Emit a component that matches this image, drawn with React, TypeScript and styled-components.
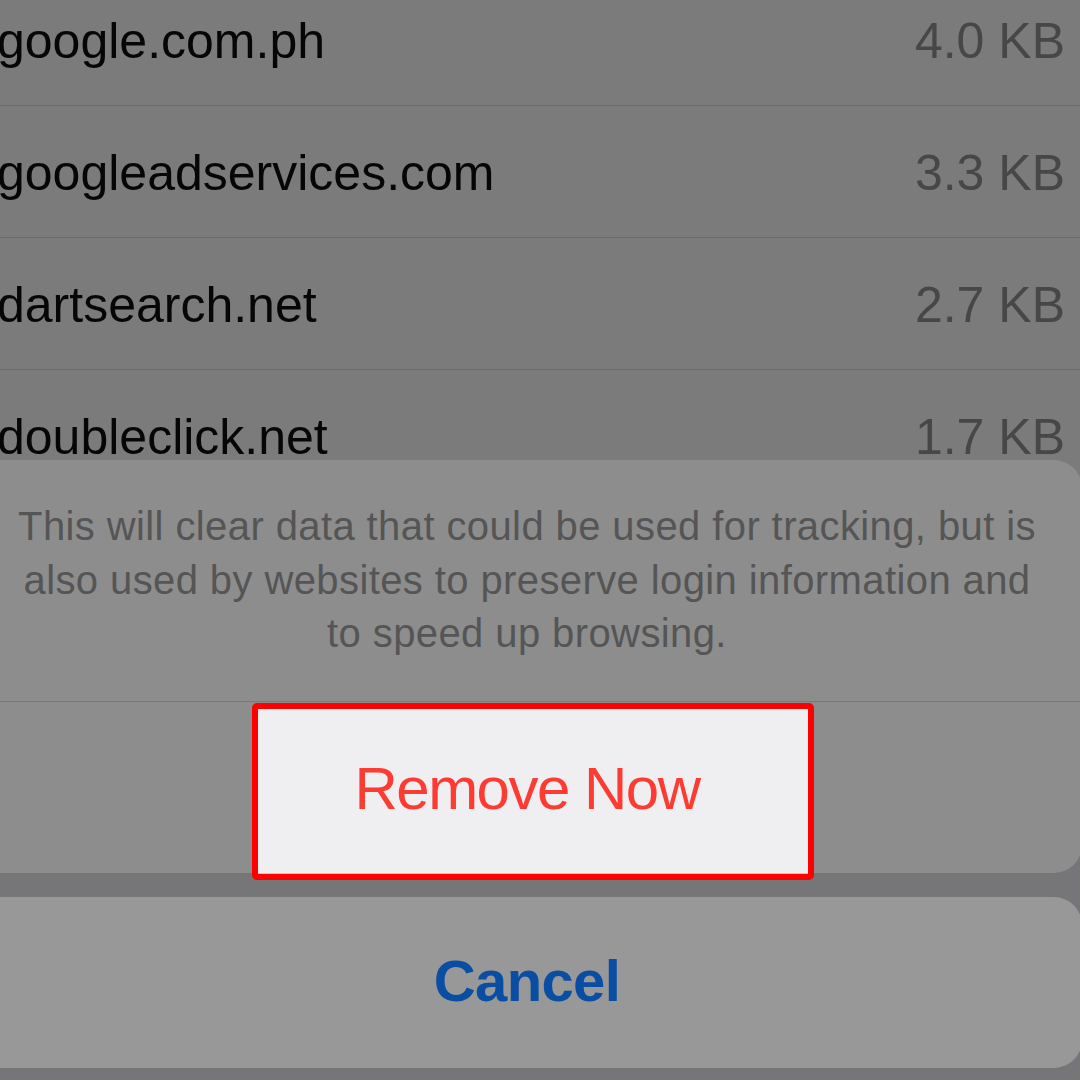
import React from "react";
import styled, { createGlobalStyle } from "styled-components";

const Global = createGlobalStyle`
  html, body {
    margin: 0;
    padding: 0;
    background: #767678;
    overflow: hidden;
  }
  body {
    font-family: "Liberation Sans", Arial, sans-serif;
  }
`;

const Screen = styled.div`
  position: relative;
  width: 1080px;
  height: 1080px;
  overflow: hidden;
  background: #767678;
`;

const List = styled.ul`
  list-style: none;
  margin: -26px 0 0 0;
  padding: 0;
`;

const Row = styled.li`
  height: 132px;
  box-sizing: border-box;
  display: flex;
  align-items: center;
  justify-content: space-between;
  padding: 3px 15px 0 0;
  background: #7b7b7b;
  border-bottom: 1px solid #6a6a6a;
  font-size: 50px;
`;

const Domain = styled.span`
  margin-left: -3px;
  color: #060606;
`;

const Size = styled.span`
  color: #474747;
  margin-left: 3px;
`;

const Sheet = styled.div`
  position: absolute;
  left: -28px;
  top: 460px;
  width: 1110px;
  display: flex;
  flex-direction: column;
  gap: 24px;
`;

const Group = styled.div`
  position: relative;
  z-index: 1;
  background: #8d8d8d;
  border-radius: 28px;
  display: flex;
  flex-direction: column;
`;

const Message = styled.p`
  margin: 0;
  padding: 40px 34px 40px 34px;
  text-align: center;
  font-size: 40px;
  letter-spacing: 0.4px;
  line-height: 53.5px;
  color: #555556;
  border-bottom: 1px solid #787879;
`;

const ActionButton = styled.div`
  position: relative;
  height: 171px;
  display: flex;
  align-items: center;
  justify-content: center;
`;

const Highlight = styled.div`
  position: absolute;
  left: 280px;
  top: 1px;
  width: 562px;
  height: 177px;
  box-sizing: border-box;
  border: 6px solid #ff0000;
  border-radius: 5px;
  background: #efeff1;
  box-shadow: inset 0 -1px 0 #c8c8ca;
`;

const ActionLabel = styled.span`
  position: relative;
  font-size: 60px;
  letter-spacing: -1.5px;
  color: #fc3b33;
  margin-top: 2px;
`;

const CancelButton = styled.div`
  height: 171px;
  background: #989898;
  border-radius: 28px;
  display: flex;
  align-items: center;
  justify-content: center;
`;

const CancelLabel = styled.span`
  font-size: 58px;
  font-weight: 700;
  letter-spacing: -0.6px;
  color: #0a4ea3;
  margin-top: -3px;
`;

const rows = [
  { domain: "google.com.ph", size: "4.0 KB" },
  { domain: "googleadservices.com", size: "3.3 KB" },
  { domain: "dartsearch.net", size: "2.7 KB" },
  { domain: "doubleclick.net", size: "1.7 KB" },
];

export default function App() {
  return (
    <Screen>
      <Global />
      <List>
        {rows.map((r) => (
          <Row key={r.domain}>
            <Domain>{r.domain}</Domain>
            <Size>{r.size}</Size>
          </Row>
        ))}
      </List>
      <Sheet>
        <Group>
          <Message>
            This will clear data that could be used for tracking, but is also
            used by websites to preserve login information and to speed up
            browsing.
          </Message>
          <ActionButton>
            <Highlight />
            <ActionLabel>Remove Now</ActionLabel>
          </ActionButton>
        </Group>
        <CancelButton>
          <CancelLabel>Cancel</CancelLabel>
        </CancelButton>
      </Sheet>
    </Screen>
  );
}
